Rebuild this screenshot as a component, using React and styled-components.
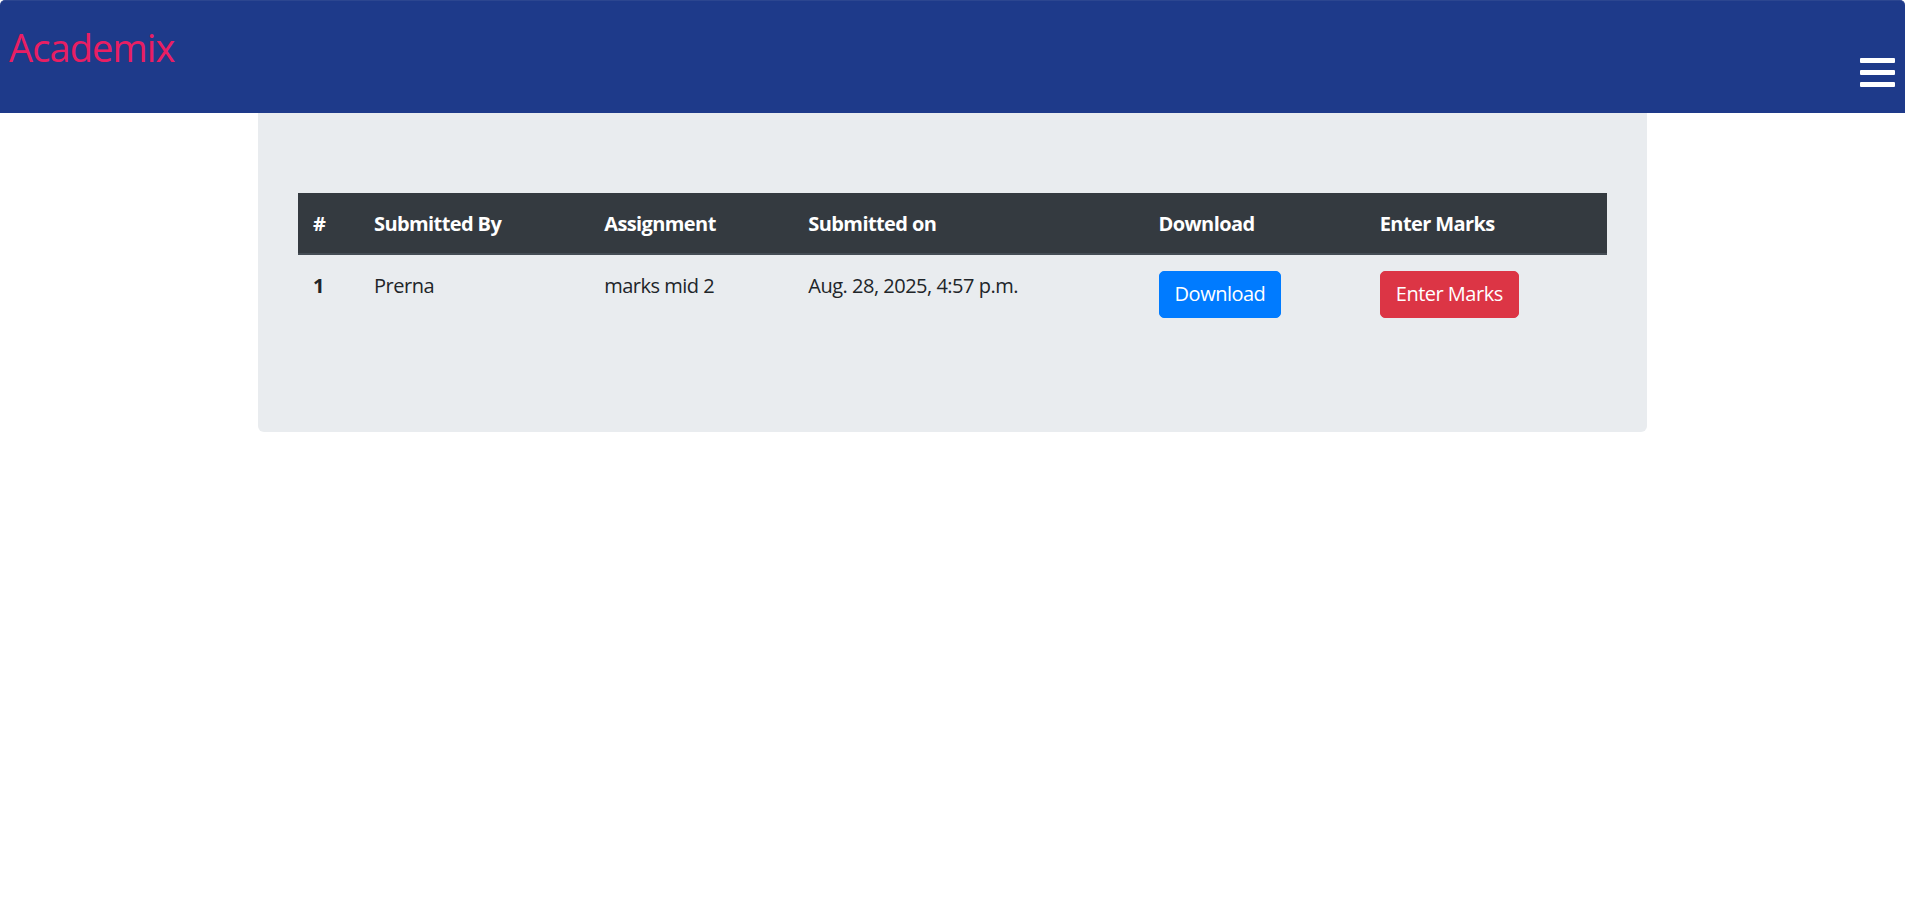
import React from "react";
import styled, { createGlobalStyle } from "styled-components";

const GlobalStyle = createGlobalStyle`
  html, body { margin: 0; padding: 0; background: #ffffff; }
  body {
    font-family: "Open Sans", "Noto Sans", "Liberation Sans", sans-serif;
    font-size: 20px;
    line-height: 30px;
    color: #212529;
    letter-spacing: -0.5px;
  }
  * { box-sizing: border-box; }
`;

const NavBar = styled.header`
  height: 113px;
  background: #1e3a8a;
  border-top: 1px solid #2c4690;
  border-radius: 5px 5px 0 0;
  display: flex;
  justify-content: space-between;
  align-items: flex-start;
  padding: 0 10px 0 9px;
`;

const Brand = styled.a`
  color: #e91e63;
  font-size: 38px;
  line-height: 60px;
  margin-top: 16px;
  text-decoration: none;
  letter-spacing: -0.9px;
`;

const Toggler = styled.button`
  background: none;
  border: none;
  padding: 0;
  margin-top: 56px;
  display: flex;
  cursor: pointer;
`;

const Jumbotron = styled.main`
  width: 1389px;
  margin: 0 auto;
  background: #e9ecef;
  border-radius: 0 0 6px 6px;
  padding: 80px 40px;
`;

const Table = styled.table`
  width: 100%;
  border-collapse: collapse;
  table-layout: fixed;
  margin-bottom: 20px;
`;

const Col = styled.col`
  width: ${(p) => p.$w}px;
`;

const HeadCell = styled.th`
  background: #343a40;
  color: #ffffff;
  font-weight: 700;
  text-align: left;
  vertical-align: bottom;
  padding: 16px 15px 14px;
  border-bottom: 2px solid #454d55;
  white-space: nowrap;
  letter-spacing: -0.6px;
`;

const Cell = styled.td`
  padding: 16px 15px 14px;
  vertical-align: top;
  text-align: left;
  font-weight: ${(p) => (p.$bold ? 700 : 400)};
  white-space: nowrap;
`;

const Button = styled.button`
  font-family: inherit;
  font-size: 20px;
  line-height: 30px;
  letter-spacing: -0.5px;
  padding: 7px 15px 8px;
  border: 1px solid ${(p) => p.$color};
  background: ${(p) => p.$color};
  color: #ffffff;
  border-radius: 5px;
  cursor: pointer;
`;

const BarsIcon = () => (
  <svg width="35" height="30" viewBox="0 0 35 30" aria-hidden="true">
    <rect x="0" y="1" width="35" height="5" rx="1" fill="#ffffff" />
    <rect x="0" y="13" width="35" height="5" rx="1" fill="#ffffff" />
    <rect x="0" y="25" width="35" height="5" rx="1" fill="#ffffff" />
  </svg>
);

const rows = [
  { id: 1, by: "Prerna", assignment: "marks mid 2", on: "Aug. 28, 2025, 4:57 p.m." },
];

export default function App() {
  return (
    <>
      <GlobalStyle />
      <NavBar>
        <Brand href="#">Academix</Brand>
        <Toggler aria-label="Menu">
          <BarsIcon />
        </Toggler>
      </NavBar>
      <Jumbotron>
        <Table>
          <colgroup>
            <Col $w={61} />
            <Col $w={230} />
            <Col $w={204} />
            <Col $w={350} />
            <Col $w={221} />
            <Col $w={242} />
          </colgroup>
          <thead>
            <tr>
              <HeadCell>#</HeadCell>
              <HeadCell>Submitted By</HeadCell>
              <HeadCell>Assignment</HeadCell>
              <HeadCell>Submitted on</HeadCell>
              <HeadCell>Download</HeadCell>
              <HeadCell>Enter Marks</HeadCell>
            </tr>
          </thead>
          <tbody>
            {rows.map((r) => (
              <tr key={r.id}>
                <Cell $bold>{r.id}</Cell>
                <Cell>{r.by}</Cell>
                <Cell>{r.assignment}</Cell>
                <Cell>{r.on}</Cell>
                <Cell>
                  <Button $color="#007bff">Download</Button>
                </Cell>
                <Cell>
                  <Button $color="#dc3545">Enter Marks</Button>
                </Cell>
              </tr>
            ))}
          </tbody>
        </Table>
      </Jumbotron>
    </>
  );
}
